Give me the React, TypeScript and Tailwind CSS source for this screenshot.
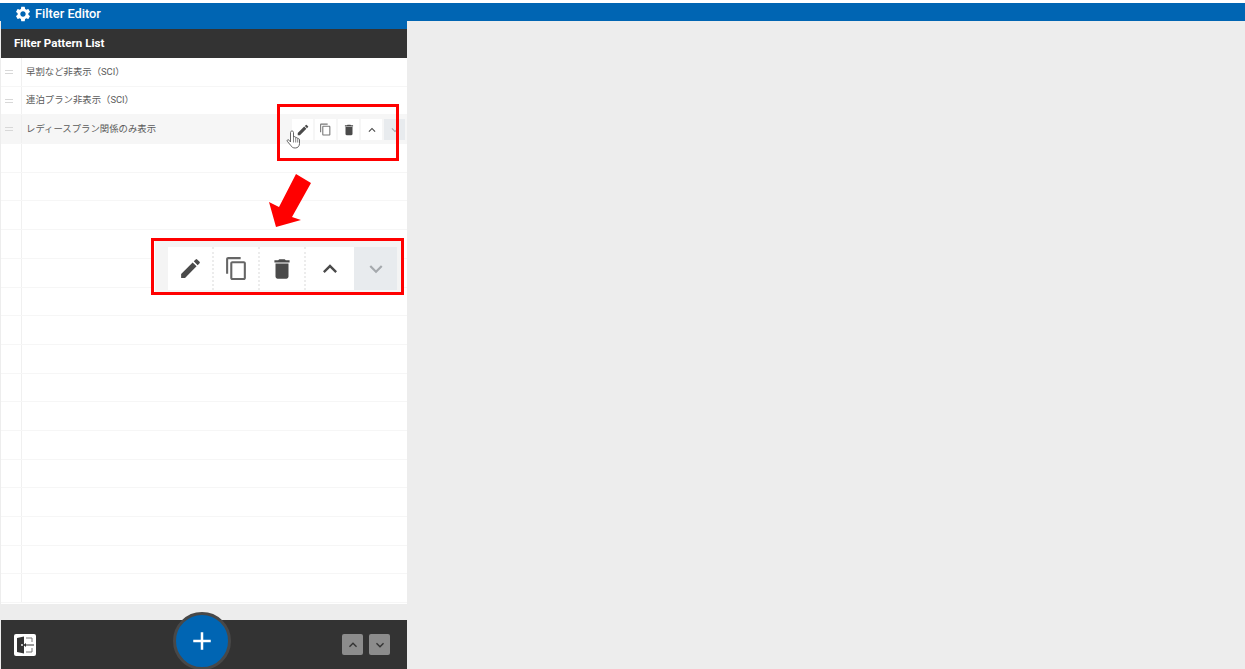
import React from "react";
import { MdEdit, MdContentCopy, MdDelete, MdKeyboardArrowUp, MdKeyboardArrowDown, MdAdd, MdSettings } from "react-icons/md";

const font = { fontFamily: 'Roboto, "Noto Sans CJK JP", sans-serif' };
const rows = ["早割など非表示（SCI）", "連泊プラン非表示（SCI）", "レディースプラン関係のみ表示"];
const blanks = Array.from({ length: 16 }, (_, i) => i);

function Hand() {
  return (
    <svg width="16" height="20" viewBox="0 0 16 20" className="absolute left-[286px] top-[130px]">
      <path d="M4.500 2.500c0-2 3-2 3 0v5c.3-1.200 2-1.200 2.200 0v.8c.3-1 1.900-.9 2 .2v.7c.4-.8 1.800-.6 1.800.5v3.800c0 2.600-1.700 4.500-4.200 4.500-2.300 0-3.500-.8-4.500-2.500L1.300 11.300c-.7-1.200.8-2.200 1.700-1.100L4.500 12z" fill="#fff" stroke="#555" strokeWidth=".9" />
      <path d="M7.500 8v4.500M9.700 8.500v4M11.700 9.500v3" stroke="#555" strokeWidth=".7" />
    </svg>
  );
}

function Arrow() {
  return (
    <svg width="50" height="60" viewBox="0 0 50 60" className="absolute left-[265px] top-[170px]">
      <polygon points="31,4 46,13 27,47 36,50 11,57 4,32 14,37" fill="#ff0000" />
    </svg>
  );
}

function DoorIcon() {
  return (
    <svg width="22" height="22" viewBox="0 0 22 22">
      <rect width="22" height="22" rx="2" fill="#fff" />
      <path d="M3 4l7-1.500v17L3 18z" fill="#333" />
      <path d="M12 4h6v4M18 14v4h-6" fill="none" stroke="#777" strokeWidth="1" />
      <path d="M10.500 11H20" stroke="#333" strokeWidth="1" />
      <path d="M9.500 11l2.500-2v4z" fill="#333" />
      <circle cx="8" cy="11" r=".9" fill="#fff" />
    </svg>
  );
}

export default function App() {
  return (
    <div style={font} className="relative h-[669px] w-[1245px] overflow-hidden bg-[#ededed]">
      <div className="h-[3px] bg-white" />
      <div className="h-[18px] bg-[#0065b3]" />
      <div className="absolute left-0 top-0 flex h-full w-[408px] flex-col pl-px pr-px">
        <div className="h-[3px] shrink-0" />
        <div className="flex h-[26px] shrink-0 items-center gap-[3px] bg-[#0065b3] pb-[4px] pl-[13px] font-medium text-white">
          <MdSettings size={18} />
          <span className="text-[12.8px]">Filter Editor</span>
        </div>
        <div className="flex h-[29px] shrink-0 items-center bg-[#333333] pl-[13px] pt-[1px] text-[11.6px] font-bold text-white">Filter Pattern List</div>
        <div className="flex h-[546px] shrink-0 flex-col overflow-hidden bg-white">
          {rows.map((r, i) => (
            <div key={r} className={`flex h-[28.7px] shrink-0 items-center border-b border-[#f6f6f6] ${i === 2 ? "bg-[#f6f6f6]" : ""}`}>
              <div className="flex h-full w-[21px] shrink-0 flex-col items-center justify-center gap-[2px] border-r border-[#f0f0f0] pr-[4px]">
                <span className="h-px w-[8px] bg-[#d8d8d8]" />
                <span className="h-px w-[8px] bg-[#d8d8d8]" />
              </div>
              <span className="pl-[4px] text-[9.4px] text-[#5a5a5a]">{r}</span>
            </div>
          ))}
          {blanks.map((i) => (
            <div key={i} className="flex h-[28.7px] shrink-0 border-b border-[#f6f6f6]">
              <div className="h-full w-[21px] border-r border-[#f0f0f0]" />
            </div>
          ))}
        </div>
        <div className="h-[16px] shrink-0" />
        <div className="flex h-[49px] shrink-0 items-center justify-between bg-[#333333] pl-[13px] pr-[17px]">
          <DoorIcon />
          <div className="flex gap-[6px]">
            <div className="flex h-[21px] w-[21px] items-center justify-center rounded-[2px] bg-[#8c8c8c] text-[#333]"><MdKeyboardArrowUp size={16} /></div>
            <div className="flex h-[21px] w-[21px] items-center justify-center rounded-[2px] bg-[#8c8c8c] text-[#333]"><MdKeyboardArrowDown size={16} /></div>
          </div>
        </div>
      </div>

      <div className="absolute left-[173px] top-[612px] flex h-[58px] w-[58px] items-center justify-center rounded-full border-[3px] border-[#484848] bg-[#0065b3] text-white">
        <MdAdd size={30} />
      </div>

      <div className="absolute left-[292px] top-[119px] flex h-[21px] items-stretch gap-[2px] text-[#4a4a4a]">
        <div className="flex w-[21px] items-center justify-center bg-white"><MdEdit size={14} /></div>
        <div className="flex w-[21px] items-center justify-center bg-white"><MdContentCopy size={13} color="#777" /></div>
        <div className="flex w-[21px] items-center justify-center bg-white"><MdDelete size={14} /></div>
        <div className="flex w-[21px] items-center justify-center bg-white"><MdKeyboardArrowUp size={14} /></div>
        <div className="flex w-[21px] items-center justify-center bg-[#e8ebee] text-[#a5a9ad]"><MdKeyboardArrowDown size={14} /></div>
      </div>
      <div className="absolute left-[277px] top-[104px] h-[57px] w-[122px] border-[3px] border-[#ff0000]" />
      <Hand />
      <Arrow />

      <div className="absolute left-[151px] top-[238px] flex h-[57px] w-[253px] items-center border-[3px] border-[#ff0000] bg-white pl-[1px]">
        <div className="flex h-[51px] w-[248px] items-end bg-[#f4f4f4] pb-[2px] pl-[13px]">
          <div className="flex h-[43px] items-stretch text-[#4a4a4a]">
            <div className="flex w-[46px] items-center justify-center border-r-2 border-dotted border-[#ececec] bg-white"><MdEdit size={25} /></div>
            <div className="flex w-[46px] items-center justify-center border-r-2 border-dotted border-[#ececec] bg-white"><MdContentCopy size={25} color="#666" /></div>
            <div className="flex w-[46px] items-center justify-center border-r-2 border-dotted border-[#ececec] bg-white"><MdDelete size={26} /></div>
            <div className="flex w-[48px] items-center justify-center bg-white"><MdKeyboardArrowUp size={28} /></div>
            <div className="flex w-[43px] items-center justify-center bg-[#e8ebee] text-[#a5a9ad]"><MdKeyboardArrowDown size={26} /></div>
          </div>
        </div>
      </div>
    </div>
  );
}
